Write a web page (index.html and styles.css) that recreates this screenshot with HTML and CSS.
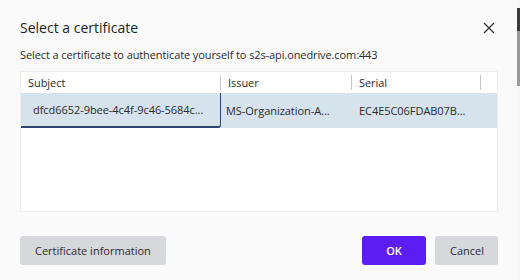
FILE: index.html
```html
<!DOCTYPE html>
<html>
<head>
<meta charset="utf-8">
<link rel="stylesheet" href="styles.css">
</head>
<body>
<div class="dialog">
  <div class="head">
    <div class="title">Select a certificate</div>
    <svg class="close" width="12" height="12" viewBox="0 0 12 12"><path d="M1 1L11 11M11 1L1 11" stroke="#333" stroke-width="1.3" fill="none"/></svg>
  </div>
  <div class="sub">Select a certificate to authenticate yourself to s2s-api.onedrive.com:443</div>
  <div class="table">
    <div class="row header">
      <div class="cell c1">Subject</div>
      <div class="cell c2">Issuer</div>
      <div class="cell c3">Serial</div>
      <div class="cell c4"></div>
    </div>
    <div class="row sel">
      <div class="cell c1 focus">dfcd6652-9bee-4c4f-9c46-5684c...</div>
      <div class="cell c2">MS-Organization-A...</div>
      <div class="cell c3">EC4E5C06FDAB07B...</div>
      <div class="cell c4"></div>
    </div>
  </div>
  <div class="buttons">
    <button class="btn grey">Certificate information</button>
    <div class="spacer"></div>
    <button class="btn ok">OK</button>
    <button class="btn grey cancel">Cancel</button>
  </div>
</div>
<div class="edge"></div>
</body>
</html>
```
FILE: styles.css
```css
html, body {
  margin: 0;
  padding: 0;
  width: 520px;
  height: 280px;
  overflow: hidden;
  background: #f7f7f8;
  font-family: "Open Sans", "Noto Sans", sans-serif;
  color: #2b2b2b;
}
.dialog {
  width: 478px;
  height: 280px;
  padding: 0 20px;
  background: #fafafb;
  display: flex;
  flex-direction: column;
}
.head {
  display: flex;
  align-items: center;
  justify-content: space-between;
  height: 20px;
  margin-top: 18px;
}
.title {
  font-size: 14px;
  line-height: 20px;
  color: #1e1e1e;
}
.close {
  margin-right: 3px;
}
.sub {
  margin-top: 9px;
  font-size: 11px;
  letter-spacing: -0.1px;
  line-height: 16px;
  color: #2b2b2b;
}
.table {
  margin-top: 8px;
  height: 141px;
  background: #fff;
  border: 1px solid #eeeff1;
  box-sizing: border-box;
  font-size: 11px;
  letter-spacing: -0.05px;
}
.row {
  display: flex;
}
.header {
  height: 21px;
  align-items: center;
}
.header .cell {
  border-right: 1px solid #c9c9c9;
  height: 15px;
  line-height: 15px;
  padding-left: 7px;
}
.header .c4 { border-right: none; }
.cell {
  box-sizing: border-box;
  white-space: nowrap;
  overflow: hidden;
}
.c1 { width: 200px; }
.c2 { width: 131px; }
.c3 { width: 129px; }
.c4 { flex: 1; }
.sel {
  height: 35px;
  background: #d6e2ec;
}
.sel .cell {
  line-height: 35px;
  padding-left: 8px;
}
.sel .c1 { padding-left: 12px; }
.sel .c2 { padding-left: 5px; }
.sel .c3 { padding-left: 7px; }
.focus {
  border-right: 1.5px solid #2d4470;
  border-bottom: 2px solid #2d4470;
  border-bottom-right-radius: 3px;
  line-height: 33px !important;
}
.buttons {
  display: flex;
  margin-top: 24px;
  gap: 9px;
}
.spacer { flex: 1; }
.btn {
  height: 29px;
  border: none;
  border-radius: 3px;
  font-family: "Open Sans", "Noto Sans", sans-serif;
  font-size: 11px;
  padding: 0 15px;
  color: #2b2b2b;
}
.grey { background: #d6d8db; }
.ok {
  width: 64px;
  background: #5a1ef2;
  color: #fff;
  font-weight: 600;
}
.cancel { width: 63px; }
.edge {
  position: absolute;
  top: 8px;
  left: 517px;
  width: 3px;
  height: 78px;
  background: linear-gradient(#3a3a3a 0, #3a3a3a 30%, #9a9a9a 30%, #9a9a9a 100%);
}
```
